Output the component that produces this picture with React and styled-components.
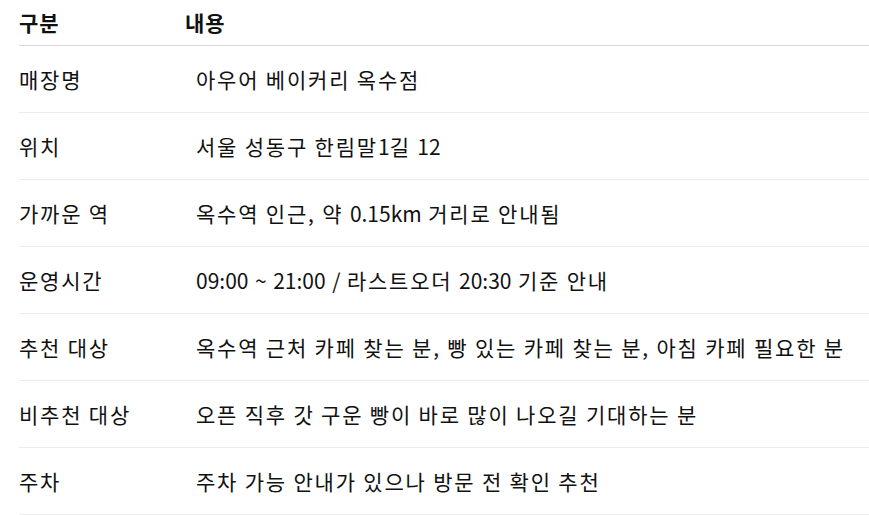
import React from "react";
import styled, { createGlobalStyle } from "styled-components";

const Global = createGlobalStyle`
  html, body { margin: 0; padding: 0; background: #ffffff; }
  body { font-family: "Noto Sans CJK KR", "Noto Sans", sans-serif; color: #111111; }
`;

const Table = styled.div`
  margin-left: 19px;
  width: 850px;
  display: flex;
  flex-direction: column;
`;

const Row = styled.div`
  display: grid;
  grid-template-columns: ${(p) => p.$first}px 1fr;
  align-items: center;
  height: ${(p) => p.$height}px;
  border-bottom: 1px solid ${(p) => p.$line};
  box-sizing: border-box;
`;

const Cell = styled.div`
  font-size: 21px;
  font-weight: ${(p) => (p.$bold ? 700 : 400)};
  line-height: 1;
  white-space: nowrap;
  letter-spacing: ${(p) => (p.$bold ? "1px" : "1.8px")};
`;

const Latin = styled.span`
  letter-spacing: 0;
`;

const rows = [
  ["매장명", "아우어 베이커리 옥수점"],
  ["위치", "서울 성동구 한림말1길 12"],
  ["가까운 역", "옥수역 인근, 약 0.15km 거리로 안내됨"],
  ["운영시간", "09:00 ~ 21:00 / 라스트오더 20:30 기준 안내"],
  ["추천 대상", "옥수역 근처 카페 찾는 분, 빵 있는 카페 찾는 분, 아침 카페 필요한 분"],
  ["비추천 대상", "오픈 직후 갓 구운 빵이 바로 많이 나오길 기대하는 분"],
  ["주차", "주차 가능 안내가 있으나 방문 전 확인 추천"],
];

function Text({ value }) {
  const parts = value.split(/([0-9A-Za-z:.~/]+)/);
  return parts.map((part, i) =>
    /^[0-9A-Za-z:.~/]+$/.test(part) ? <Latin key={i}>{part}</Latin> : part
  );
}

export default function App() {
  return (
    <>
      <Global />
      <Table>
        <Row $first={166} $height={46} $line="#d9d9d9">
          <Cell $bold>구분</Cell>
          <Cell $bold>내용</Cell>
        </Row>
        {rows.map(([k, v]) => (
          <Row key={k} $first={177} $height={67} $line="#ececec">
            <Cell>{k}</Cell>
            <Cell>
              <Text value={v} />
            </Cell>
          </Row>
        ))}
      </Table>
    </>
  );
}
